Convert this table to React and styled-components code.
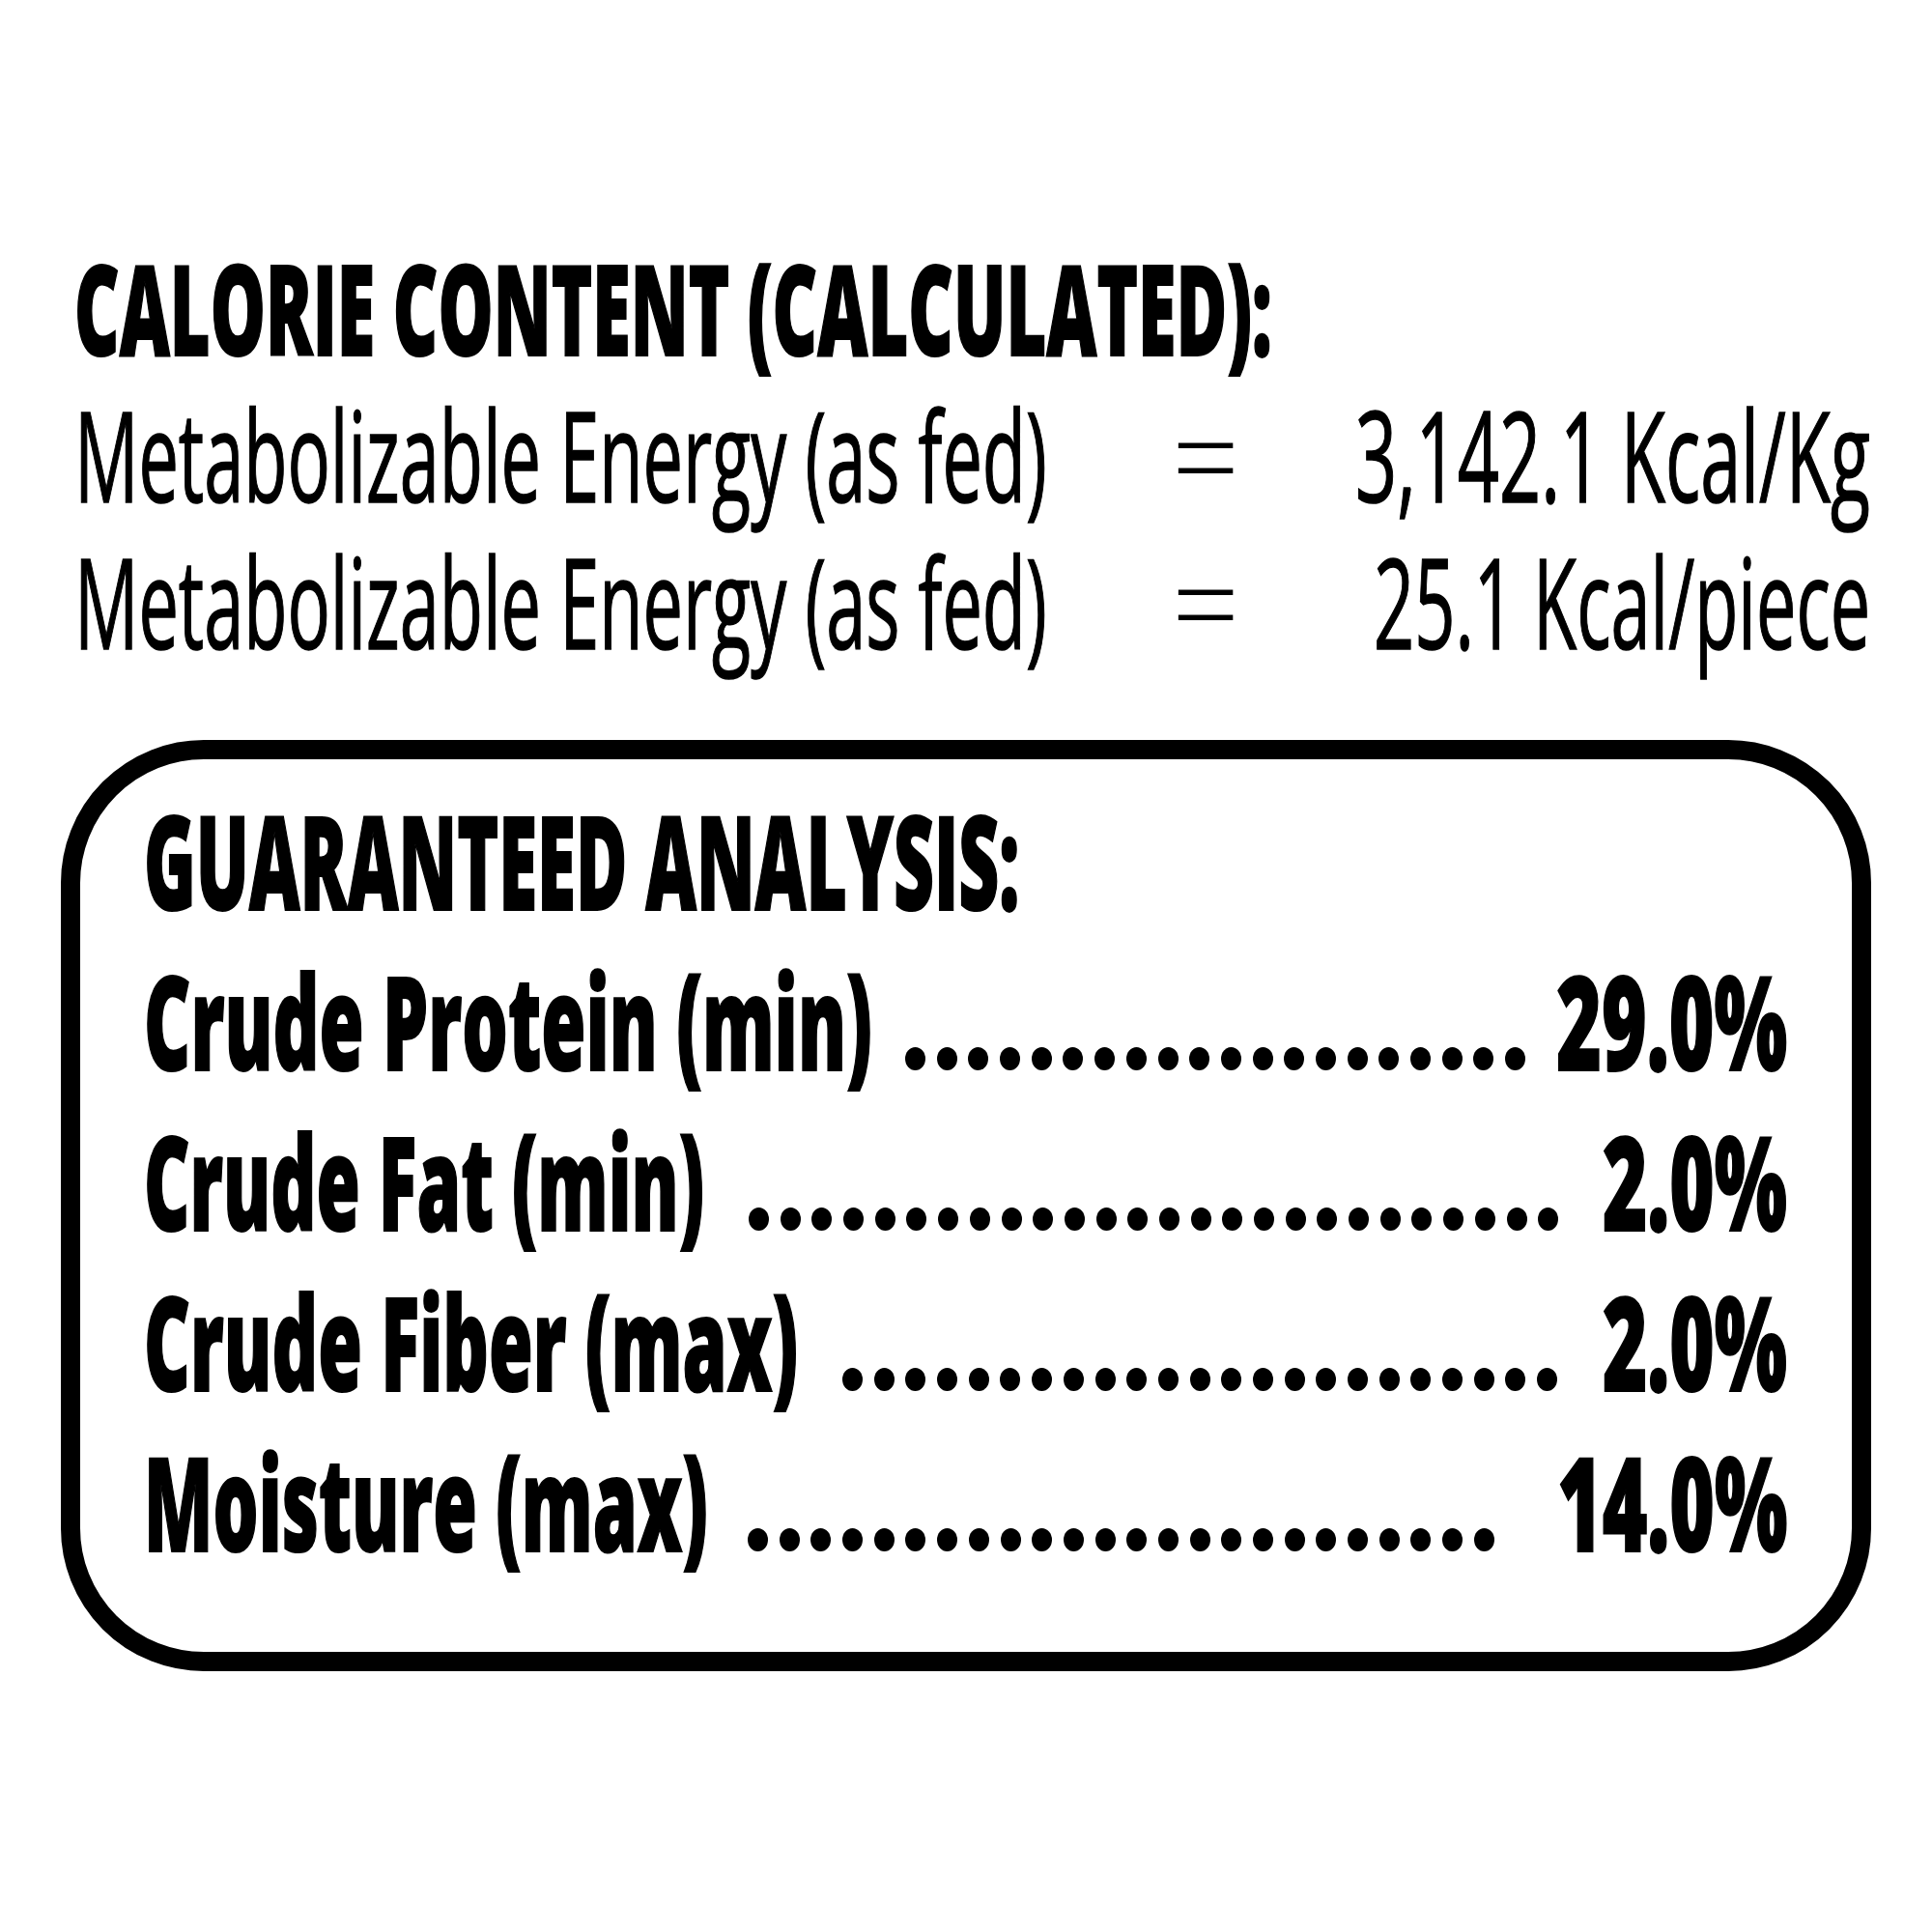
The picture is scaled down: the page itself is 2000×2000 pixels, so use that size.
import React, { useLayoutEffect, useRef, useState } from 'react';
import styled, { createGlobalStyle } from 'styled-components';

const GlobalStyles = createGlobalStyle`
  html, body {
    margin: 0;
    padding: 0;
    background: #fff;
  }
  body {
    font-family: "Open Sans", "Noto Sans", "Liberation Sans", sans-serif;
    color: #000;
  }
`;

const Page = styled.div`
  width: 2000px;
  height: 2000px;
  box-sizing: border-box;
  padding: 242px 63px 0 63px;
  background: #fff;
`;

/* top block: calorie content */
const CalorieSection = styled.section`
  padding: 0 1px 0 14px;
  font-size: 130px;
  line-height: 152px;
`;

const Heading = styled.div`
  height: 152px;
  font-weight: 800;
  -webkit-text-stroke: 2px #000;
`;

const EnergyRow = styled.div`
  display: grid;
  grid-template-columns: 1136px 70px 1fr;
  align-items: baseline;
  height: 152px;
  font-weight: 400;
  -webkit-text-stroke: 1.5px #000;
`;

const Cell = styled.div`
  display: flex;
  justify-content: ${(p) => (p.$end ? 'flex-end' : p.$center ? 'center' : 'flex-start')};
`;

const EqualsCell = styled(Cell)`
  font-weight: 300;
  -webkit-text-stroke: 0;
`;

/* bottom block: guaranteed analysis */
const AnalysisBox = styled.section`
  margin-top: 68px;
  height: 964px;
  box-sizing: border-box;
  border: 20px solid #000;
  border-radius: 148px;
  padding: 21px 67px 0 66px;
  font-size: 134px;
  line-height: 166px;
  font-weight: 800;
  -webkit-text-stroke: 2px #000;
`;

const AnalysisTitle = styled.div`
  height: 166px;
`;

const AnalysisRow = styled.div`
  display: flex;
  align-items: baseline;
  height: 166px;
`;

const Leader = styled.span`
  display: inline-flex;
  flex: none;
  gap: 11.7px;
  margin-left: ${(p) => p.$lead}px;
`;

const Dot = styled.span`
  flex: none;
  width: 21px;
  height: 24px;
  border-radius: 50%;
  background: #000;
`;

const Amount = styled.span`
  margin-left: auto;
  display: inline-flex;
`;

/* condensed text: squeezes the natural run into a fixed width */
const FitBox = styled.span`
  display: inline-flex;
  flex: none;
  width: ${(p) => p.$width}px;
  white-space: nowrap;
  justify-content: ${(p) =>
    p.$align === 'right' ? 'flex-end' : p.$align === 'center' ? 'center' : 'flex-start'};
`;

const FitText = styled.span`
  flex: none;
  display: inline-block;
  transform-origin: ${(p) =>
    p.$align === 'right' ? 'right' : p.$align === 'center' ? 'center' : 'left'} center;
`;

function Squeeze({ width, align = 'left', children }) {
  const ref = useRef(null);
  const [scale, setScale] = useState(0.6);

  useLayoutEffect(() => {
    const measure = () => {
      if (ref.current && ref.current.offsetWidth) {
        setScale(width / ref.current.offsetWidth);
      }
    };
    measure();
    if (document.fonts && document.fonts.ready) document.fonts.ready.then(measure);
  }, [width, children]);

  return (
    <FitBox $width={width} $align={align}>
      <FitText ref={ref} $align={align} style={{ transform: `scaleX(${scale})` }}>
        {children}
      </FitText>
    </FitBox>
  );
}

const energy = [
  { label: 'Metabolizable Energy (as fed)', labelWidth: 1007, value: '3,142.1 Kcal/Kg', valueWidth: 533 },
  { label: 'Metabolizable Energy (as fed)', labelWidth: 1007, value: '25.1 Kcal/piece', valueWidth: 514 },
];

const analysis = [
  { label: 'Crude Protein (min)', labelWidth: 754, lead: 34, dots: 20, value: '29.0%', valueWidth: 239 },
  { label: 'Crude Fat (min)', labelWidth: 580, lead: 46, dots: 26, value: '2.0%', valueWidth: 191 },
  { label: 'Crude Fiber (max)', labelWidth: 677, lead: 46, dots: 23, value: '2.0%', valueWidth: 191 },
  { label: 'Moisture (max)', labelWidth: 584, lead: 41, dots: 24, value: '14.0%', valueWidth: 238 },
];

export default function App() {
  return (
    <Page>
      <GlobalStyles />
      <CalorieSection>
        <Heading>
          <Squeeze width={1240}>CALORIE CONTENT (CALCULATED):</Squeeze>
        </Heading>
        {energy.map((row, i) => (
          <EnergyRow key={i}>
            <Cell>
              <Squeeze width={row.labelWidth}>{row.label}</Squeeze>
            </Cell>
            <EqualsCell $center>
              <Squeeze width={70} align="center">=</Squeeze>
            </EqualsCell>
            <Cell $end>
              <Squeeze width={row.valueWidth} align="right">{row.value}</Squeeze>
            </Cell>
          </EnergyRow>
        ))}
      </CalorieSection>

      <AnalysisBox>
        <AnalysisTitle>
          <Squeeze width={906}>GUARANTEED ANALYSIS:</Squeeze>
        </AnalysisTitle>
        {analysis.map((row) => (
          <AnalysisRow key={row.label}>
            <Squeeze width={row.labelWidth}>{row.label}</Squeeze>
            <Leader $lead={row.lead}>
              {Array.from({ length: row.dots }, (_, i) => (
                <Dot key={i} />
              ))}
            </Leader>
            <Amount>
              <Squeeze width={row.valueWidth} align="right">{row.value}</Squeeze>
            </Amount>
          </AnalysisRow>
        ))}
      </AnalysisBox>
    </Page>
  );
}
